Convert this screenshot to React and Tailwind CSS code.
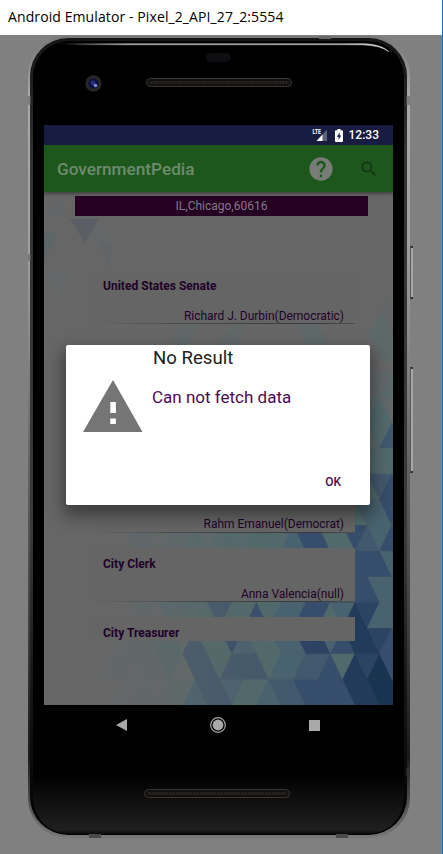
import React from "react";

const PALETTE = {
  a: "#616869",
  b: "#5c696b",
  c: "#54696d",
  d: "#50696b",
  e: "#48626f",
  f: "#42586c",
  g: "#364d6b",
  h: "#2d4363",
  i: "#233b5a",
  j: "#193450",
};

// Triangle mosaic, bottom row first; each string runs left to right.
const ROWS = [
  "...aababbeffeddeffggggiijj",
  "..ababbcaffdfffdeeffgdihjg",
  "...abbccafddgeddeehhegiihg",
  "....abacccdfddgdeeggdeihee",
  ".....................gggee",
  ".....................dggge",
  "....bbabbcbcdcddceggddgfeg",
  ".....................ddeeg",
  ".....................cddfg",
  ".....................bcccd",
  "......................bbcf",
  "......................abca",
  ".......................aab",
];

const ROW_H = 25.7;
const HALF_W = 12.3;

function Mosaic() {
  const tris = [];
  ROWS.forEach((row, k) => {
    const bottom = 560 - ROW_H * k;
    const top = bottom - ROW_H;
    row.split("").forEach((c, n) => {
      if (c === ".") return;
      const h = n - 23;
      const x = 311 + HALF_W * h;
      const up = Math.abs(h) % 2 === k % 2;
      const y1 = up ? bottom : top;
      const y2 = up ? top : bottom;
      tris.push(
        <polygon
          key={k + "-" + n}
          points={`${x},${y1} ${x + HALF_W * 2},${y1} ${x + HALF_W},${y2}`}
          fill={PALETTE[c]}
          stroke={PALETTE[c]}
          strokeWidth="0.4"
        />
      );
    });
  });
  return (
    <svg className="absolute inset-0" width="349" height="560" viewBox="0 0 349 560">
      <defs>
        <linearGradient id="fade" x1="0" x2="1" y1="0" y2="0">
          <stop offset="0" stopColor="#666666" stopOpacity="0.8" />
          <stop offset="0.5" stopColor="#666666" stopOpacity="0.2" />
          <stop offset="0.7" stopColor="#666666" stopOpacity="0" />
        </linearGradient>
      </defs>
      {tris}
      <rect y="380" width="349" height="180" fill="url(#fade)" />
      <polygon points="26,74 55,74 41,98" fill="#5b5f65" />
      <polygon points="0,88 14,88 0,116" fill="#5d6666" />
      <polygon points="2,72 14,52 26,72" fill="#626668" />
      <polygon points="41,98 55,74 69,98" fill="#636768" />
      <polygon points="55,98 69,98 66,124" fill="#626567" />
      <polygon points="325,190 337,166 349,186 349,215 340,218" fill="#5d6868" />
      <polygon points="337,166 349,145 349,190" fill="#626666" />
      <polygon points="125,200 137,180 154,180 144,200" fill="#5f6767" />
      <polygon points="173,200 187,180 199,180 195,200" fill="#5f6767" />
      <polygon points="253,180 274,180 284,200 263,200" fill="#5f6868" />
      <polygon points="0,128 14,150 26,128" fill="#646868" />
    </svg>
  );
}

function Card({ title, person, className = "" }) {
  return (
    <div className={"relative ml-[47px] w-[264px] bg-[#656565] text-[12px] leading-[14px] text-[#210228] " + className}>
      <div className="pl-[12px] pt-[9px] font-bold tracking-[0.02px]">{title}</div>
      {person && <div className="mt-[16px] pr-[11px] text-right tracking-[-0.020px]">{person}</div>}
    </div>
  );
}

function Grille({ className }) {
  return (
    <div className={"h-[9px] w-[146px] rounded-full border border-[#39362f] bg-[#12110f] p-[2px] " + className}>
      <div className="h-full w-full rounded-full bg-[repeating-linear-gradient(90deg,#1d1b17_0px,#1d1b17_2px,#2a2722_2px,#2a2722_3px)]" />
    </div>
  );
}

function StatusBar() {
  return (
    <div className="flex h-[20px] items-center justify-end bg-[#181c41] pr-[14px] text-white">
      <svg width="16" height="14" viewBox="0 0 16 14" className="mr-[7px]">
        <path d="M15 1.500V13H4.500Z" fill="#5d607a" />
        <path d="M10.500 6.500V13H4.500Z" fill="#ffffff" />
        <text x="0.500" y="6.200" fontSize="6.500" fontWeight="700" fontFamily="Roboto, sans-serif" fill="#ffffff" textLength="8.500" lengthAdjust="spacingAndGlyphs">LTE</text>
      </svg>
      <svg width="8" height="13" viewBox="0 0 8 13" className="mr-[6px]">
        <path d="M2.500 0h3v1.300H7a1 1 0 0 1 1 1V12a1 1 0 0 1-1 1H1a1 1 0 0 1-1-1V2.300a1 1 0 0 1 1-1h1.500Z" fill="#ffffff" />
        <path d="M4.700 3.500 1.800 7.800h1.800v3L6.300 6.600H4.700Z" fill="#181c41" />
      </svg>
      <span className="text-[12px] font-medium leading-[20px]">12:33</span>
    </div>
  );
}

function AppBar() {
  return (
    <div className="relative z-10 flex h-[47px] items-center bg-[#1d571c] pl-[13px] shadow-[0_2px_3px_rgba(0,0,0,0.35)]">
      <span className="flex-1 text-[17.200px] font-medium leading-[24px] text-[#6e8b6e]">GovernmentPedia</span>
      <svg width="28" height="28" viewBox="0 0 24 24" className="mr-[24px]">
        <path fill="#777c77" d="M12 2C6.480 2 2 6.480 2 12s4.480 10 10 10 10-4.480 10-10S17.520 2 12 2zm1 17h-2v-2h2v2zm2.070-7.750-.9.920C13.450 12.900 13 13.500 13 15h-2v-.5c0-1.100.45-2.100 1.170-2.830l1.240-1.260c.37-.36.590-.86.590-1.410 0-1.100-.9-2-2-2s-2 .9-2 2H8c0-2.210 1.790-4 4-4s4 1.790 4 4c0 .88-.36 1.680-.93 2.250z" />
      </svg>
      <svg width="20" height="20" viewBox="0 0 24 24" className="mr-[14px]">
        <path fill="#123612" d="M15.500 14h-.79l-.28-.27C15.410 12.590 16 11.110 16 9.500 16 5.910 13.090 3 9.500 3S3 5.910 3 9.500 5.910 16 9.500 16c1.610 0 3.090-.59 4.230-1.570l.27.28v.79l5 4.990L20.490 19l-4.990-5zm-6 0C7.010 14 5 11.990 5 9.500S7.010 5 9.500 5 14 7.010 14 9.500 11.990 14 9.500 14z" />
      </svg>
    </div>
  );
}

function Dialog() {
  return (
    <div className="absolute left-[22px] top-[220px] flex h-[160px] w-[304px] flex-col rounded-[2px] bg-white shadow-[0_8px_16px_3px_rgba(0,0,0,0.4)]">
      <div className="pl-[87px] pt-[1px] text-[18.600px] leading-[24px] text-[#212121]">No Result</div>
      <div className="flex">
        <svg width="60" height="52" viewBox="0 0 60 52" className="ml-[17px] mt-[10px]">
          <path fill="#757575" fillRule="evenodd" d="M30 0 59.500 52H0ZM27.300 22V33H32.900V22ZM27.300 38.500V44H32.900V38.500Z" />
        </svg>
        <div className="ml-[9px] mt-[16px] text-[17px] leading-[23px] text-[#4a0a55]">Can not fetch data</div>
      </div>
      <div className="mb-[16px] mt-auto pr-[29px] text-right text-[12px] font-medium leading-[14px] text-[#4a0a55]">OK</div>
    </div>
  );
}

function Rule() {
  return <div className="ml-[47px] h-px w-[264px] bg-[linear-gradient(90deg,#666666,#454b4d_35%,#353b3d_85%,#4b5254)]" />;
}

function Screen() {
  return (
    <div className="relative h-[580px] w-[349px]">
      <StatusBar />
      <div className="relative h-[560px] overflow-hidden bg-[#666666]">
        <Mosaic />
        <div className="relative flex flex-col">
          <AppBar />
          <div className="ml-[31px] mt-[4px] h-[20px] w-[293px] bg-[#250022] text-center text-[12px] leading-[21px] text-[#85788a]">IL,Chicago,60616</div>
          <Card title="United States Senate" person="Richard J. Durbin(Democratic)" className="mt-[54px] h-[53px]" />
          <Rule />
          <Card title="Mayor" person="Rahm Emanuel(Democrat)" className="mt-[154px] h-[54px]" />
          <Rule />
          <Card title="City Clerk" person="Anna Valencia(null)" className="mt-[15px] h-[53px]" />
          <Rule />
          <Card title="City Treasurer" className="mt-[15px] h-[24px]" />
        </div>
      </div>
      <Dialog />
    </div>
  );
}

function NavBar() {
  return (
    <div className="flex h-[40px] items-center text-[#a9a9a9]">
      <svg width="12" height="12" viewBox="0 0 12 12" className="ml-[72px]">
        <path d="M0 6 11 0V12Z" fill="currentColor" />
      </svg>
      <svg width="16" height="16" viewBox="0 0 16 16" className="ml-[82px]">
        <circle cx="8" cy="8" r="7.300" fill="none" stroke="currentColor" strokeWidth="1.200" />
        <circle cx="8" cy="8" r="5.400" fill="currentColor" />
      </svg>
      <div className="ml-[83px] h-[11px] w-[11px] bg-[#a9a9a9]" />
    </div>
  );
}

function SideButton({ className }) {
  return (
    <div className={"absolute left-[382px] w-[3px] border-y-2 border-l border-y-[#333333] border-l-[#5a5a5a] bg-[#a6a6a6] " + className} />
  );
}

function Phone() {
  return (
    <div className="relative ml-[28px] mt-[1px] h-[802px] w-[382px] rounded-[40px] bg-[linear-gradient(180deg,#777777_0px,#aaaaaa_60px,#a2a2a2_200px,#8b8b8b_300px,#606060_440px,#3c3c3c_600px,#1a1a1a_720px,#7a7a7a_803px)] pb-[3px] pl-[2px] pr-[3px] pt-[2px]">
      <div className="h-full rounded-[38px] bg-[linear-gradient(180deg,#151515_0px,#333333_120px,#3a3a3a_500px,#161616_650px,#000000_100%)] px-[3px] pb-[1px] pt-[3px]">
        <div className="flex h-full flex-col rounded-[36px] bg-[linear-gradient(180deg,#000000_0%,#000000_92.500%,#0c0c0c_95%,#202020_99.500%,#0a0a0a_100%)]">
          <div className="flex h-[84px] flex-col">
            <svg width="371" height="14" viewBox="0 0 371 14" className="shrink-0">
              <defs>
                <linearGradient id="shine" gradientUnits="userSpaceOnUse" x1="25" y1="0" x2="355" y2="0">
                  <stop offset="0" stopColor="#9a9a9a" stopOpacity="0" />
                  <stop offset="0.2" stopColor="#9a9a9a" />
                  <stop offset="0.85" stopColor="#a0a0a0" />
                  <stop offset="1" stopColor="#e0e0e0" />
                </linearGradient>
              </defs>
              <path d="M25 2.500H330Q349 3 356 11Q348 4.500 330 4H45Z" fill="url(#shine)" stroke="url(#shine)" strokeWidth="0.300" />
            </svg>
            <div className="mx-auto -mt-[2px] h-[9px] w-[25px] shrink-0 rounded-full bg-[#0d0e12]" />
            <div className="flex items-center pt-[13px]">
              <svg width="17" height="17" viewBox="0 0 17 17" className="ml-[52px]">
                <circle cx="8.500" cy="8.500" r="8.200" fill="#262626" />
                <circle cx="8.500" cy="8.500" r="5" fill="#0c1040" />
                <circle cx="8" cy="8" r="2.500" fill="#272d77" />
                <circle cx="10.500" cy="10.500" r="1.800" fill="#7d88c8" />
              </svg>
              <Grille className="-mt-[2px] ml-[44px]" />
            </div>
          </div>
          <div className="ml-[11px]">
            <Screen />
            <NavBar />
          </div>
          <Grille className="ml-[111px] mt-[44px]" />
        </div>
      </div>
      <div className="absolute left-0 top-[60px] h-[9px] w-[3px] bg-[#606060]/60" />
      <div className="absolute right-0 top-[60px] h-[9px] w-[4px] bg-[#606060]/60" />
      <div className="absolute left-0 top-[218px] h-[7px] w-[3px] bg-[#606060]/60" />
      <div className="absolute right-0 top-[732px] h-[8px] w-[4px] bg-[#333333]/60" />
      <div className="absolute bottom-0 left-[61px] h-[4px] w-[12px] bg-[#4a4a4a]" />
      <div className="absolute bottom-0 left-[308px] h-[4px] w-[12px] bg-[#4a4a4a]" />
      <div className="absolute left-[291px] top-0 h-[3px] w-[12px] bg-[#666666]" />
      <SideButton className="top-[210px] h-[53px]" />
      <SideButton className="top-[331px] h-[106px]" />
    </div>
  );
}

export default function App() {
  return (
    <div className="flex h-[854px] w-[443px] flex-col overflow-hidden border-r border-[#1173b8] bg-[#808080] font-['Roboto',sans-serif]">
      <div className="h-[35px] shrink-0 bg-white pl-[8px] font-['Open_Sans','Noto_Sans',sans-serif] text-[14px] leading-[33px] tracking-[0.100px] text-black">
        Android Emulator - Pixel_2_API_27_2:5554
      </div>
      <Phone />
    </div>
  );
}
